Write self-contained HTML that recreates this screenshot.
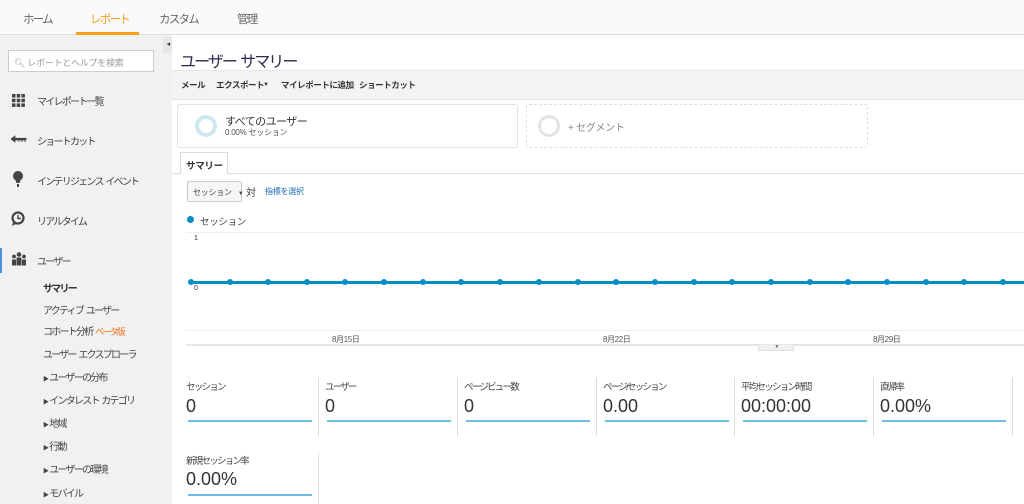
<!DOCTYPE html>
<html><head><meta charset="utf-8"><style>
*{margin:0;padding:0;box-sizing:border-box}
body{width:1024px;height:504px;overflow:hidden;background:#fff;font-family:"Liberation Sans","Noto Sans CJK JP",sans-serif;color:#333;position:relative;letter-spacing:-0.11em;word-spacing:0.1em}
.a{position:absolute;white-space:nowrap}
.top{left:0;top:0;width:1024px;height:35px;background:#fafafa;border-bottom:1px solid #ddd}
.tab{font-size:11.5px;color:#666;top:11px}
.side{left:0;top:35px;width:172px;height:469px;background:#f1f1f1}
.it{font-size:10px;color:#444;left:37px}
.sub{font-size:10px;color:#444;left:43px}
.ml{font-size:9.5px;color:#444}
.mv{font-size:18px;color:#333;letter-spacing:0}
.bar{height:2px;background:#6bbde3;width:124px}
.sep{width:1px;background:#ddd}
.dot{width:6px;height:6px;border-radius:50%;background:#058dc7;top:279px}
.xl{font-size:8px;color:#555;top:334px;letter-spacing:-0.05em;word-spacing:0}
.tb{font-size:8.5px;font-weight:bold;color:#333;top:79px;letter-spacing:-0.05em}
.s0{letter-spacing:-0.03em;word-spacing:0}
</style></head><body>
<div class="a top"></div>
<div class="a tab" style="left:23px">ホーム</div>
<div class="a tab" style="left:90px;color:#f7a11b">レポート</div>
<div class="a" style="left:76px;top:32px;width:63px;height:3px;background:#f7a11b"></div>
<div class="a tab" style="left:159px">カスタム</div>
<div class="a tab" style="left:237px">管理</div>
<div class="a side"></div>
<div class="a" style="left:163px;top:37px;width:9px;height:16px;background:#e6e6e6;font-size:7px;color:#333;text-align:center;line-height:16px">◂</div>
<div class="a" style="left:8px;top:50px;width:146px;height:22px;background:#fff;border:1px solid #ccc"></div>
<div class="a s0" style="left:14px;top:56px;font-size:9px;color:#999">🔍︎ レポートとヘルプを検索</div>
<svg class="a" style="left:12px;top:94px" width="13" height="13"><g fill="#444"><rect x="0" y="0" width="3.5" height="3.5"/><rect x="4.7" y="0" width="3.5" height="3.5"/><rect x="9.4" y="0" width="3.5" height="3.5"/><rect x="0" y="4.7" width="3.5" height="3.5"/><rect x="4.7" y="4.7" width="3.5" height="3.5"/><rect x="9.4" y="4.7" width="3.5" height="3.5"/><rect x="0" y="9.4" width="3.5" height="3.5"/><rect x="4.7" y="9.4" width="3.5" height="3.5"/><rect x="9.4" y="9.4" width="3.5" height="3.5"/></g></svg>
<div class="a it" style="top:93px">マイレポート一覧</div>
<svg class="a" style="left:11px;top:135px" width="16" height="8"><path d="M0 4L4 1V7Z M3 3.3H15V5H3Z M8 5v2 M11 5v2 M14 5v2" fill="#444" stroke="#444" stroke-width=".8"/></svg>
<div class="a it" style="top:133px">ショートカット</div>
<svg class="a" style="left:13px;top:171px" width="10" height="16"><ellipse cx="5" cy="5" rx="5" ry="5" fill="#444"/><path d="M2 8L3.5 12H6.5L8 8Z" fill="#444"/><rect x="4" y="13" width="2" height="3" fill="#444"/></svg>
<div class="a it" style="top:173px">インテリジェンス イベント</div>
<svg class="a" style="left:11px;top:211px" width="15" height="16"><circle cx="7" cy="7" r="5.5" fill="none" stroke="#444" stroke-width="2.2"/><path d="M7 4V7.5H10" fill="none" stroke="#444" stroke-width="1.4"/><path d="M2 11L1 15L5 13Z" fill="#444"/></svg>
<div class="a it" style="top:213px">リアルタイム</div>
<div class="a" style="left:0;top:248px;width:2px;height:25px;background:#4a90e2"></div>
<svg class="a" style="left:11px;top:252px" width="16" height="14"><g fill="#444"><circle cx="8" cy="2.5" r="2.3"/><circle cx="3" cy="4.5" r="1.9"/><circle cx="13" cy="4.5" r="1.9"/><rect x="5.5" y="5.5" width="5" height="8"/><rect x="1" y="7.5" width="4" height="6"/><rect x="11" y="7.5" width="4" height="6"/></g></svg>
<div class="a it" style="top:253px">ユーザー</div>
<div class="a sub" style="top:280px;font-weight:bold;color:#333">サマリー</div>
<div class="a sub" style="top:302px">アクティブ ユーザー</div>
<div class="a sub" style="top:323px">コホート分析 <span style="color:#e8711c;font-size:9px">ベータ版</span></div>
<div class="a sub" style="top:346px">ユーザー エクスプローラ</div>
<div class="a sub" style="top:369px"><span style="font-size:6px;margin-right:2px">▶</span>ユーザーの分布</div>
<div class="a sub" style="top:392px"><span style="font-size:6px;margin-right:2px">▶</span>インタレスト カテゴリ</div>
<div class="a sub" style="top:415px"><span style="font-size:6px;margin-right:2px">▶</span>地域</div>
<div class="a sub" style="top:438px"><span style="font-size:6px;margin-right:2px">▶</span>行動</div>
<div class="a sub" style="top:461px"><span style="font-size:6px;margin-right:2px">▶</span>ユーザーの環境</div>
<div class="a sub" style="top:485px"><span style="font-size:6px;margin-right:2px">▶</span>モバイル</div>

<div class="a" style="left:180px;top:48px;font-size:16px;color:#2f2a4a;letter-spacing:-0.12em">ユーザー サマリー</div>
<div class="a" style="left:172px;top:70px;width:852px;height:30px;background:#f3f3f3;border-top:1px solid #e5e5e5;border-bottom:1px solid #e5e5e5"></div>
<div class="a tb" style="left:181px">メール</div>
<div class="a tb" style="left:216px">エクスポート</div>
<div class="a tb" style="left:263px;font-size:6px;top:82px">▼</div>
<div class="a tb" style="left:281px">マイレポートに追加</div>
<div class="a tb" style="left:359px">ショートカット</div>
<div class="a" style="left:177px;top:104px;width:341px;height:44px;border:1px solid #e3e3e3;border-radius:3px"></div>
<div class="a" style="left:195px;top:115px;width:22px;height:22px;border-radius:50%;border:4px solid #cfe6f3"></div>
<div class="a" style="left:225px;top:113px;font-size:11px;color:#333;letter-spacing:-0.05em">すべてのユーザー</div>
<div class="a s0" style="left:225px;top:127px;font-size:8px;color:#555">0.00% セッション</div>
<div class="a" style="left:526px;top:104px;width:342px;height:44px;border:1px dashed #e0e0e0;border-radius:3px"></div>
<div class="a" style="left:538px;top:115px;width:22px;height:22px;border-radius:50%;border:3px solid #e4e4e4"></div>
<div class="a s0" style="left:568px;top:119px;font-size:10px;color:#888">+ セグメント</div>
<div class="a" style="left:172px;top:173px;width:852px;height:1px;background:#ddd"></div>
<div class="a s0" style="left:180px;top:152px;width:48px;height:22px;background:#fff;border:1px solid #ddd;border-bottom:none;font-size:9.5px;font-weight:bold;color:#333;padding:5px 0 0 5px">サマリー</div>
<div class="a s0" style="left:187px;top:181px;width:55px;height:21px;border:1px solid #ccc;border-radius:2px;background:#f6f6f6;font-size:8px;color:#444;padding:5px 0 0 5px">セッション<span style="font-size:6px;margin-left:6px">▼</span></div>
<div class="a" style="left:246px;top:184px;font-size:10px;color:#444">対</div>
<div class="a s0" style="left:265px;top:186px;font-size:8px;color:#1a66b5">指標を選択</div>
<div class="a" style="left:187px;top:216px;width:7px;height:7px;border-radius:50%;background:#058dc7"></div>
<div class="a s0" style="left:200px;top:214px;font-size:9.5px;color:#444">セッション</div>
<div class="a" style="left:186px;top:232px;width:838px;height:1px;background:#eee"></div>
<div class="a" style="left:194px;top:235px;font-size:7px;color:#333">1</div>
<div class="a" style="left:186px;top:330px;width:838px;height:1px;background:#eee"></div>
<div class="a" style="left:186px;top:344px;width:838px;height:2px;background:#e6e6e6"></div>
<div class="a" style="left:758px;top:345px;width:36px;height:6px;background:#f0f0f0;border:1px solid #ddd;border-top:none;font-size:5px;text-align:center;color:#666;line-height:5px">▼</div>
<div class="a" style="left:191px;top:281px;width:833px;height:3px;background:#058dc7"></div>
<div class="a" style="left:194px;top:285px;font-size:7px;color:#333">0</div>
<div class="a xl" style="left:332px">8月15日</div>
<div class="a xl" style="left:603px">8月22日</div>
<div class="a xl" style="left:873px">8月29日</div>

<div class="a ml" style="left:186px;top:379px">セッション</div><div class="a mv" style="left:186px;top:396px">0</div><div class="a bar" style="left:188px;top:420px"></div>
<div class="a sep" style="left:318px;top:378px;height:58px"></div>
<div class="a ml" style="left:325px;top:379px">ユーザー</div><div class="a mv" style="left:325px;top:396px">0</div><div class="a bar" style="left:327px;top:420px"></div>
<div class="a sep" style="left:457px;top:378px;height:58px"></div>
<div class="a ml" style="left:464px;top:379px">ページビュー数</div><div class="a mv" style="left:464px;top:396px">0</div><div class="a bar" style="left:466px;top:420px"></div>
<div class="a sep" style="left:596px;top:378px;height:58px"></div>
<div class="a ml" style="left:603px;top:379px">ページ/セッション</div><div class="a mv" style="left:603px;top:396px">0.00</div><div class="a bar" style="left:605px;top:420px"></div>
<div class="a sep" style="left:734px;top:378px;height:58px"></div>
<div class="a ml" style="left:741px;top:379px">平均セッション時間</div><div class="a mv" style="left:741px;top:396px">00:00:00</div><div class="a bar" style="left:743px;top:420px"></div>
<div class="a sep" style="left:873px;top:378px;height:58px"></div>
<div class="a ml" style="left:880px;top:379px">直帰率</div><div class="a mv" style="left:880px;top:396px">0.00%</div><div class="a bar" style="left:882px;top:420px"></div>
<div class="a sep" style="left:1012px;top:378px;height:58px"></div>
<div class="a ml" style="left:186px;top:453px">新規セッション率</div><div class="a mv" style="left:186px;top:469px">0.00%</div><div class="a bar" style="left:188px;top:494px"></div>
<div class="a sep" style="left:318px;top:453px;height:51px"></div>
<div class="a dot" style="left:188px"></div><div class="a dot" style="left:227px"></div><div class="a dot" style="left:265px"></div><div class="a dot" style="left:304px"></div><div class="a dot" style="left:342px"></div><div class="a dot" style="left:381px"></div><div class="a dot" style="left:420px"></div><div class="a dot" style="left:458px"></div><div class="a dot" style="left:497px"></div><div class="a dot" style="left:536px"></div><div class="a dot" style="left:575px"></div><div class="a dot" style="left:613px"></div><div class="a dot" style="left:652px"></div><div class="a dot" style="left:691px"></div><div class="a dot" style="left:729px"></div><div class="a dot" style="left:768px"></div><div class="a dot" style="left:807px"></div><div class="a dot" style="left:845px"></div><div class="a dot" style="left:884px"></div><div class="a dot" style="left:923px"></div><div class="a dot" style="left:961px"></div><div class="a dot" style="left:1000px"></div>
</body></html>
